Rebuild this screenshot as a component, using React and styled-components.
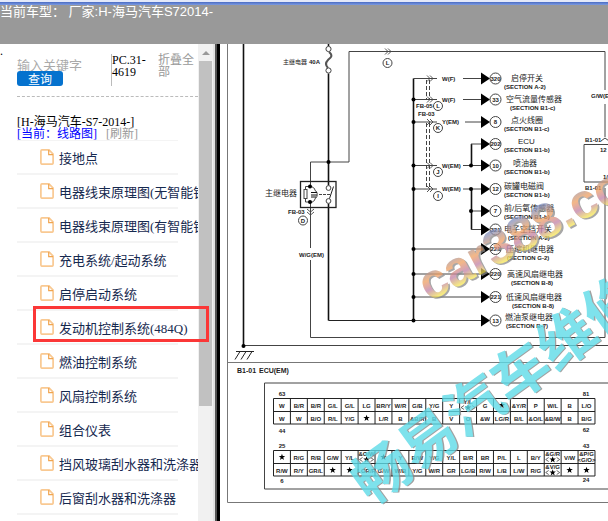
import React from "react";
import styled, { createGlobalStyle } from "styled-components";

const GlobalStyle = createGlobalStyle`
  * {
    box-sizing: border-box;
  }

  body {
    margin: 0;
    background: #fff;
    font-family: "Liberation Serif", "Noto Sans CJK SC", serif;
    font-size: 12px;
  }
`;

const Page = styled.div`
  display: flex;
  flex-direction: column;
  height: 100vh;
  overflow: hidden;
`;

const Header = styled.header`
  height: 44px;
  flex: none;
  border-top: 2px solid #e3e9fa;
  background: linear-gradient(#4a6cc4, #7d9be0) top / 100% 3px no-repeat #999;
  color: #fff;
  font-family: "Liberation Sans", "Noto Sans CJK SC", sans-serif;
  font-size: 13px;
  line-height: 20px;
  white-space: pre;
`;

const Main = styled.main`
  display: flex;
  flex: 1;
  min-height: 0;
`;

const Sidebar = styled.aside`
  display: flex;
  width: 198px;
  flex: none;
`;

const Gutter = styled.div`
  width: 17px;
  flex: none;
`;

const SidebarContent = styled.div`
  flex: 1;
  min-width: 0;
  padding-top: 10px;
`;

const SearchBar = styled.form`
  display: flex;
  height: 43px;
  border-bottom: 1px dashed #bbb;
  line-height: 12px;
`;

const SearchField = styled.div`
  width: 94px;
  padding-top: 4px;
`;

const SearchInput = styled.input`
  display: block;
  width: 80px;
  height: 13px;
  padding: 0;
  border: 0;
  outline: 0;
  background: none;
  font: 13px/13px "Noto Sans CJK SC", sans-serif;

  &::placeholder {
    color: #aaa;
    opacity: 1;
  }
`;

const SearchButton = styled.button`
  display: block;
  width: 46px;
  height: 15px;
  padding: 0;
  border: 0;
  border-radius: 3px;
  background: #0572ce;
  color: #fff;
  font: 12px/15px "Noto Sans CJK SC", sans-serif;
`;

const Code = styled.div`
  width: 47px;
  height: 32px;
  padding: 0 4px 0 0;
  border-left: 1px solid #bbb;
`;

const Fold = styled.a`
  width: 40px;
  color: #999;
  text-decoration: none;
`;

const Model = styled.div`
  padding-top: 19px;
  line-height: 12px;
  color: #000;
  white-space: nowrap;
`;

const ModelLink = styled.a`
  margin-right: 6px;
  color: ${({ $muted }) => ($muted ? "#999" : "#00f")};
  text-decoration: none;
`;

const Menu = styled.ul`
  width: 161px;
  margin: 0;
  padding: 0;
  list-style: none;
  font-size: 13px;
  border-top: 1px solid #f4f4f4;
`;

const MenuItem = styled.li`
  position: relative;
  height: 34px;
  border-bottom: 2px solid #f4f4f4;
`;

const MenuLink = styled.a`
  display: flex;
  align-items: center;
  gap: 5px;
  width: 181px;
  height: 32px;
  padding-left: 23px;
  overflow: hidden;
  color: #16294f;
  text-decoration: none;
  white-space: nowrap;

  svg {
    flex: none;
  }
`;

const Highlight = styled.div`
  position: absolute;
  z-index: 1;
  top: -5px;
  left: 16px;
  width: 176px;
  height: 36px;
  border: 3px solid #fb3737;
  pointer-events: none;
`;

const Scrollbar = styled.div`
  display: flex;
  flex-direction: column;
  align-items: center;
  width: 15px;
  flex: none;
  background: #f1f1f1;
`;

const ScrollArrow = styled.div`
  margin: 7px 0 6px;
  border: 4px solid transparent;
  border-top: 0;
  border-bottom-color: #999;
`;

const ScrollThumb = styled.div`
  width: 13px;
  height: 345px;
  background: #c1c1c1;
`;

const Splitter = styled.div`
  width: 7px;
  flex: none;
  border: solid;
  border-width: 0 3px 0 2px;
  border-color: #000 #000 #000 #e3e3e3;
  background: #555;
`;

const Viewer = styled.section`
  flex: 1;
  min-width: 0;
  overflow: hidden;
`;

const Drawing = styled.svg`
  display: block;
  fill: none;
  stroke: #444;

  text {
    fill: #222;
    stroke: none;
    font-family: "Liberation Sans", "Noto Sans CJK SC", sans-serif;
    font-size: 7px;
  }

  .bold {
    font-weight: bold;
  }

  .mid {
    text-anchor: middle;
  }

  .cn {
    font-size: 8px;
  }

  .small {
    font-size: 6px;
  }

  .thick {
    stroke: #111;
    stroke-width: 1.6;
  }

  .solid {
    fill: #000;
    stroke: none;
  }

  .site {
    font-size: 49px;
    font-weight: bold;
  }

  .brand {
    font-family: "Noto Sans CJK SC", sans-serif;
    font-size: 57px;
    font-weight: bold;
  }

  .shade {
    fill: #8a8a8a;
  }

  .rainbow {
    fill: url(#rainbow);
  }

  .cyan {
    fill: #5edbe8;
  }
`;

const menu = [
  "接地点",
  "电器线束原理图(无智能钥匙)",
  "电器线束原理图(有智能钥匙)",
  "充电系统/起动系统",
  "启停启动系统",
  "发动机控制系统(484Q)",
  "燃油控制系统",
  "风扇控制系统",
  "组合仪表",
  "挡风玻璃刮水器和洗涤器",
  "后窗刮水器和洗涤器",
];

// y, start of the line, pin, name, name x, section, section x, section y
const outputs = [
  [78.5, 463, "320", "启停开关", 511, "A-2", 504, 89],
  [99.5, 463, "33", "空气流量传感器", 506, "B1-c", 510, 110],
  [122, 465, "8", "点火线圈", 511, "B1-c", 504, 131],
  [144, 471, "202", "ECU", 518, "B1-b", 504, 152],
  [165.5, 463, "10", "喷油器", 513, "B1-b", 504, 174],
  [189, 463, "12", "碳罐电磁阀", 504, "B1-b", 504, 197],
  [211, 471, "7", "前/后氧传感器", 504, "B1-b", 504, 219],
  [229.5, 471, "321", "电子空挡开关", 504, "A-2", 508, 240],
  [249, 413, "221", "压缩机继电器", 506, "G-2", 507, 260],
  [274, 413, "220", "高速风扇继电器", 507, "B-8", 511, 285],
  [297, 413, "221", "低速风扇继电器", 506, "B-8", 512, 308],
  [320.5, 413, "13", "燃油泵继电器", 505, "B-7", 506, 328],
];

const branches = [
  [78.5, "W(F)"],
  [99.5, "W(F)"],
  [122, "Y(EM)"],
  [165.5, "W(EM)"],
  [189, "W(EM)"],
];

const dots = [
  [243.5, 346], [328.5, 162], [310, 186.5], [310, 202],
  [413.5, 99.5], [413.5, 122], [413.5, 165.5], [413.5, 189], [413.5, 249],
  [413.5, 274], [413.5, 297], [413.5, 320.5],
  [471, 165.5], [471, 189], [471, 211],
];

const letters = [
  [387.5, 63, "L"], [303, 220.5, "D"], [438, 106, "L"],
  [438, 128, "K"], [438, 172, "J"], [438, 196, "I"],
];

const labels = [
  [309, 64, "40A"], [288, 214, "FB-03"], [299, 257, "W/G(EM)"],
  [416, 108, "FB-05"], [418, 116, "FB-03"],
  [591, 98, "G/W(EM)"], [585, 142, "B1-01"], [600, 152, "12"], [603, 179, "1/"], [585, 190, "B1-01"],
  [237, 373, "B1-01"], [259, 373, "ECU(EM)"],
];

// a "|" splits a cell in two lines
const pinRows = [
  [398.5, "W B/R B/R G/L G/L LG BR/Y W/R G/B Y/G Y Y/L|<★> G ★ &Y/R P W/L B L/O"],
  [411.5, "W W B/O R/L Y/G ★ L/R B &B/R B V O &W LG/R B/L &O/L &B/W B B/G"],
  [450.5, "★ R/G R/B G/W Y/L &O/W|<★> ★ Y B/W Y/G Y/L B/R BR P/L L B/Y &G/R|<★> V/W &P/G|<G/O>"],
  [463.5, "R/W R/Y GR/L ★ ★ LGR/R G/W W/B Y/G W/R GR LG/B R/W L/B L/W R/G &V/G|<★> ★ ★"],
];

const pinNumbers = [
  [282, 396, "63"], [282, 433, "44"], [282, 448, "25"], [282, 483, "6"],
  [586, 396, "81"], [586, 432, "62"], [586, 448, "43"], [586, 482, "24"],
];

const COLS = 19;
const PITCH = 16.92;
const LEFT = 273.5;

const FileIcon = () => (
  <svg width="14" height="16" viewBox="0 0 14 16" fill="none" stroke="#f9c992" strokeWidth="1.7">
    <path d="M2 .9h7l4.1 4.3V14a1.2 1.2 0 0 1-1.2 1.2H2A1.2 1.2 0 0 1 .9 14V2A1.2 1.2 0 0 1 2 .9Z" />
    <path d="M8.7 1v4.6H13" stroke="#f0a550" strokeWidth="1.2" />
  </svg>
);

const Chevron = ({ x, y }) => (
  <path d={`M${x - 3} ${y - 3}l3 3-3 3M${x} ${y - 3}l3 3-3 3`} strokeWidth=".9" />
);

const Star = ({ x, y }) => (
  <path
    className="solid"
    transform={`translate(${x} ${y})`}
    d="M0-3.2.8-1 3.2-1 1.3.5 2 3 0 1.5-2 3-1.3.5-3.2-1-.8-1Z"
  />
);

const Cell = ({ x, top, value }) => {
  const [first, second] = value.split("|");

  if (first === "★") {
    return <Star x={x} y={top + 6.5} />;
  }

  return (
    <g>
      <text className="small bold mid" x={x} y={top + (second ? 5 : 9)}>{first}</text>
      {second === "<★>" && (
        <>
          <path d={`M${x - 4} ${top + 7}l-3 2 3 2M${x + 4} ${top + 7}l3 2-3 2`} strokeWidth=".8" />
          <Star x={x} y={top + 9} />
        </>
      )}
      {second && second !== "<★>" && (
        <text className="small bold mid" x={x} y={top + 11}>{second}</text>
      )}
    </g>
  );
};

const Connector = () => (
  <g>
    <path d="M608 383H264.5V489H608" />
    {[398.5, 450.5].map((top) => (
      <g key={top} stroke="#222">
        <path d={`M${LEFT} ${top}h${COLS * PITCH}m0 13h-${COLS * PITCH}m0 12.5h${COLS * PITCH}`} />
        {Array.from({ length: COLS + 1 }, (_, i) => (
          <path key={i} d={`M${LEFT + i * PITCH} ${top}v25.5`} />
        ))}
      </g>
    ))}
    {pinRows.map(([top, row]) =>
      row.split(" ").map((value, i) => (
        <Cell key={`${top}-${i}`} x={LEFT + (i + 0.5) * PITCH} top={top} value={value} />
      ))
    )}
    {pinNumbers.map(([x, y, n]) => (
      <text key={n} className="small bold mid" x={x} y={y}>{n}</text>
    ))}
  </g>
);

const Circuit = () => (
  <g>
    {/* frame and ground */}
    <path d="M227.5 44V502.5H608M227.5 362.5H608" stroke="#777" />
    <path d="M243.5 44V346" className="thick" />
    <path d="M243.5 345.5H608" />
    <path d="M236 351.5H254M240 351.5l-5 8M246 351.5l-5 8M252 351.5l-5 8" stroke="#222" />

    {/* fuse */}
    <path d="M328.5 44v2M328.5 73.5V185.5M328.5 203.5V320.5" className="thick" />
    <circle cx="328.5" cy="49" r="2.6" />
    <circle cx="328.5" cy="70.5" r="2.6" />
    <path d="M329 52c5 4 1 6-1 8s-3 5 0 8" stroke="#555" strokeWidth="2" />
    <text className="small" x="283" y="64">主继电器</text>
    <path d="M349 162V51.5H605V90M605 104V137M605 188V337.5H310.5V260M310.5 248V202M310.5 186V162H349" />
    <Chevron x={388} y={51.5} />

    {/* relay */}
    <rect x="300.5" y="181.5" width="35.5" height="26" stroke="#222" strokeWidth="1.3" />
    <path d="M310 186.5h-4.5V202h4.5M310 186.5c3 0 5 2 5 4 3 1 3 7 0 8 0 2-2 4-5 4" />
    <rect x="304" y="189.5" width="3" height="9" fill="#fff" />
    <path d="M311 192.5h6M311 195h6M311 197h5" stroke="#111" />
    <path d="M319 194.5h11" strokeDasharray="3 1" />
    <circle cx="328.5" cy="188" r="2.4" fill="#fff" />
    <circle cx="328.5" cy="201" r="2.4" fill="#fff" />
    <path d="M329.5 198.5l4-12M328.5 320.5H413.5" stroke="#222" />
    <text className="cn" x="265" y="196">主继电器</text>
    <path d="M307 209l3.5 3 3.5-3M307 212l3.5 3 3.5-3" strokeWidth=".9" />

    {/* bus */}
    <path d="M413.5 78.5V320.5" className="thick" />
    <path d="M426.5 80V100M429.5 80V100M426.5 123V188M429.5 123V188" strokeDasharray="4 2" />
    {branches.map(([y, label]) => (
      <g key={y}>
        <path d={`M413.5 ${y}H437`} />
        <Chevron x={430} y={y} />
        <text className="small bold" x="442" y={y + 2}>{label}</text>
      </g>
    ))}
    <path d="M471.5 165.5V144M471.5 189V229.5" className="thick" />
    {outputs.map(([y, start, pin, name, nameX, section, sectionX, sectionY]) => (
      <g key={y}>
        <path d={`M${start} ${y}H482`} />
        <path className="solid" d={`M481 ${y - 6}l9 6-9 6Z`} />
        <circle cx="495.5" cy={y} r="5.5" />
        <text className="small bold mid" x="495.5" y={y + 2}>{pin}</text>
        <text className="cn" x={nameX} y={sectionY - 8}>{name}</text>
        <text className="small bold" x={sectionX} y={sectionY}>(SECTION {section})</text>
      </g>
    ))}

    {/* ecu */}
    <path d="M608 144.5H584V182H608M601 141l4-3 4 3" />

    {labels.map(([x, y, label]) => (
      <text key={`${x}-${y}`} className={y === 373 ? "bold" : "small bold"} x={x} y={y}>{label}</text>
    ))}
    {dots.map(([x, y]) => (
      <circle key={`${x}-${y}`} className="solid" cx={x} cy={y} r="2" />
    ))}
    {letters.map(([x, y, letter]) => (
      <g key={`${x}-${y}`}>
        <circle cx={x} cy={y} r="4.5" />
        <text className="small bold mid" x={x} y={y + 2}>{letter}</text>
      </g>
    ))}
  </g>
);

const Watermark = () => (
  <g>
    <defs>
      <linearGradient id="rainbow" x1="0" y1="0" x2="0" y2="1">
        <stop offset=".2" stopColor="#8090c0" />
        <stop offset=".45" stopColor="#f0a060" />
        <stop offset=".62" stopColor="#c080a8" />
        <stop offset=".8" stopColor="#f4e458" />
      </linearGradient>
    </defs>
    <g transform="translate(429 302) rotate(-28)" opacity=".75">
      <text className="site shade" x="1" y="2">car388.com</text>
      <text className="site rainbow">car388.com</text>
    </g>
    <g transform="translate(371 506) rotate(-36)" opacity=".8">
      <text className="brand shade" x="1" y="1">畅易汽车维修</text>
      <text className="brand cyan">畅易汽车维修</text>
    </g>
  </g>
);

const App = () => {
  return (
    <>
      <GlobalStyle />
      <Page>
        <Header>当前车型： 厂家:H-海马汽车S72014-</Header>
        <Main>
          <Sidebar>
            <Gutter>.</Gutter>
            <SidebarContent>
              <SearchBar onSubmit={(e) => e.preventDefault()}>
                <SearchField>
                  <SearchInput aria-label="输入关键字" placeholder="输入关键字" />
                  <SearchButton>查询</SearchButton>
                </SearchField>
                <Code>PC.31-4619</Code>
                <Fold href="#fold">折叠全部</Fold>
              </SearchBar>
              <Model>
                [H-海马汽车-S7-2014-]
                <br />
                <ModelLink href="#current">[当前：线路图]</ModelLink>
                {" "}
                <ModelLink href="#refresh" $muted>[刷新]</ModelLink>
              </Model>
              <Menu>
                {menu.map((title, i) => (
                  <MenuItem key={title}>
                    <MenuLink href={`#${i}`}>
                      <FileIcon />
                      {title}
                    </MenuLink>
                    {i === 5 && <Highlight />}
                  </MenuItem>
                ))}
              </Menu>
            </SidebarContent>
          </Sidebar>
          <Scrollbar>
            <ScrollArrow />
            <ScrollThumb />
          </Scrollbar>
          <Splitter />
          <Viewer>
            <Drawing width="388" height="477" viewBox="220 44 388 477">
              <Circuit />
              <Connector />
              <Watermark />
            </Drawing>
          </Viewer>
        </Main>
      </Page>
    </>
  );
};

export default App;
